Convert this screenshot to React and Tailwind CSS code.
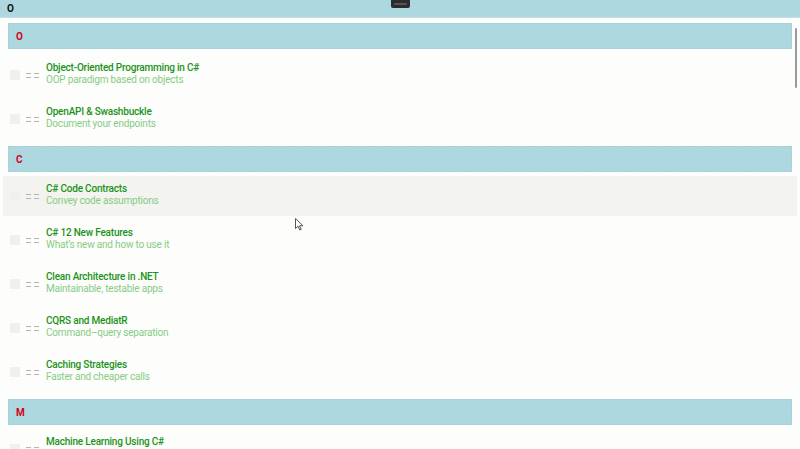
const groups = [
  {
    letter: 'O',
    items: [
      ['Object-Oriented Programming in C#', 'OOP paradigm based on objects'],
      ['OpenAPI & Swashbuckle', 'Document your endpoints'],
    ],
  },
  {
    letter: 'C',
    items: [
      ['C# Code Contracts', 'Convey code assumptions'],
      ['C# 12 New Features', 'What\u2019s new and how to use it'],
      ['Clean Architecture in .NET', 'Maintainable, testable apps'],
      ['CQRS and MediatR', 'Command\u2013query separation'],
      ['Caching Strategies', 'Faster and cheaper calls'],
    ],
  },
  {
    letter: 'M',
    items: [
      ['Machine Learning Using C#', 'Bring ML to .NET'],
      ['Minimal APIs', 'Lightweight HTTP endpoints'],
    ],
  },
];

function Handle() {
  return (
    <svg width="14" height="7" viewBox="0 0 14 7" className="shrink-0">
      <g stroke="#b4b4b4" strokeWidth="1">
        <line x1="0" y1="1.5" x2="5" y2="1.5" />
        <line x1="0" y1="5.5" x2="5" y2="5.5" />
        <line x1="8" y1="1.5" x2="13" y2="1.5" />
        <line x1="8" y1="5.5" x2="13" y2="5.5" />
      </g>
    </svg>
  );
}

function Row({ title, subtitle, hover }) {
  return (
    <div className={`flex h-10 items-center px-[7px] ${hover ? 'bg-[#f3f3ef]' : ''}`}>
      <div className="h-[10px] w-[10px] shrink-0 bg-[#f0f0ed]" />
      <div className="ml-[6px]">
        <Handle />
      </div>
      <div className="mb-[2px] ml-[6px] flex flex-col leading-[12px] tracking-[-0.2px]">
        <span className="text-[10px] font-medium text-[#1a931a]">{title}</span>
        <span className="text-[10px] text-[#86cc86]">{subtitle}</span>
      </div>
    </div>
  );
}

export default function App() {
  return (
    <div
      className="relative h-[449px] w-[800px] overflow-hidden bg-[#fdfdfb]"
      style={{ fontFamily: 'Roboto, "Open Sans", sans-serif' }}
    >
      <div className="flex h-[18px] items-center border-b border-[#c9dfe3] bg-[#add8e0] pl-[7px] text-[10px] font-bold text-[#111]">
        O
      </div>
      <div className="absolute left-[391px] top-0 flex h-[8px] w-[19px] items-center justify-center rounded-b-[2px] bg-[#2c2c2c]">
        <div className="h-[2px] w-[13px] rounded-full bg-[#555]" />
      </div>

      <div className="px-[3px]">
        {groups.map((g, gi) => (
          <div key={g.letter} className={gi === 0 ? 'mt-[5px]' : 'mt-[7px]'}>
            <div className="mx-[5px] flex h-[26px] items-center border border-dashed border-[#a3cfd7] bg-[#add8e0] pl-[7px] text-[10px] font-bold text-[#d0021b]">
              {g.letter}
            </div>
            <div className={`flex flex-col gap-1 ${gi === 0 ? 'mt-[6px]' : 'mt-1'}`}>
              {g.items.map(([t, s], i) => (
                <Row key={t} title={t} subtitle={s} hover={gi === 1 && i === 0} />
              ))}
            </div>
          </div>
        ))}
      </div>

      <div className="absolute right-[3px] top-[28px] h-[60px] w-[2px] rounded-full bg-[#9a9a9a]" />

      <svg
        className="absolute left-[295px] top-[218px]"
        width="9"
        height="13"
        viewBox="0 0 9 13"
      >
        <path d="M0.5 0.5 L0.5 10.5 L3 8.3 L4.8 12 L6.2 11.4 L4.5 7.8 L8 7.8 Z" fill="#fff" stroke="#555" strokeWidth="1" strokeLinejoin="round" />
      </svg>
    </div>
  );
}
